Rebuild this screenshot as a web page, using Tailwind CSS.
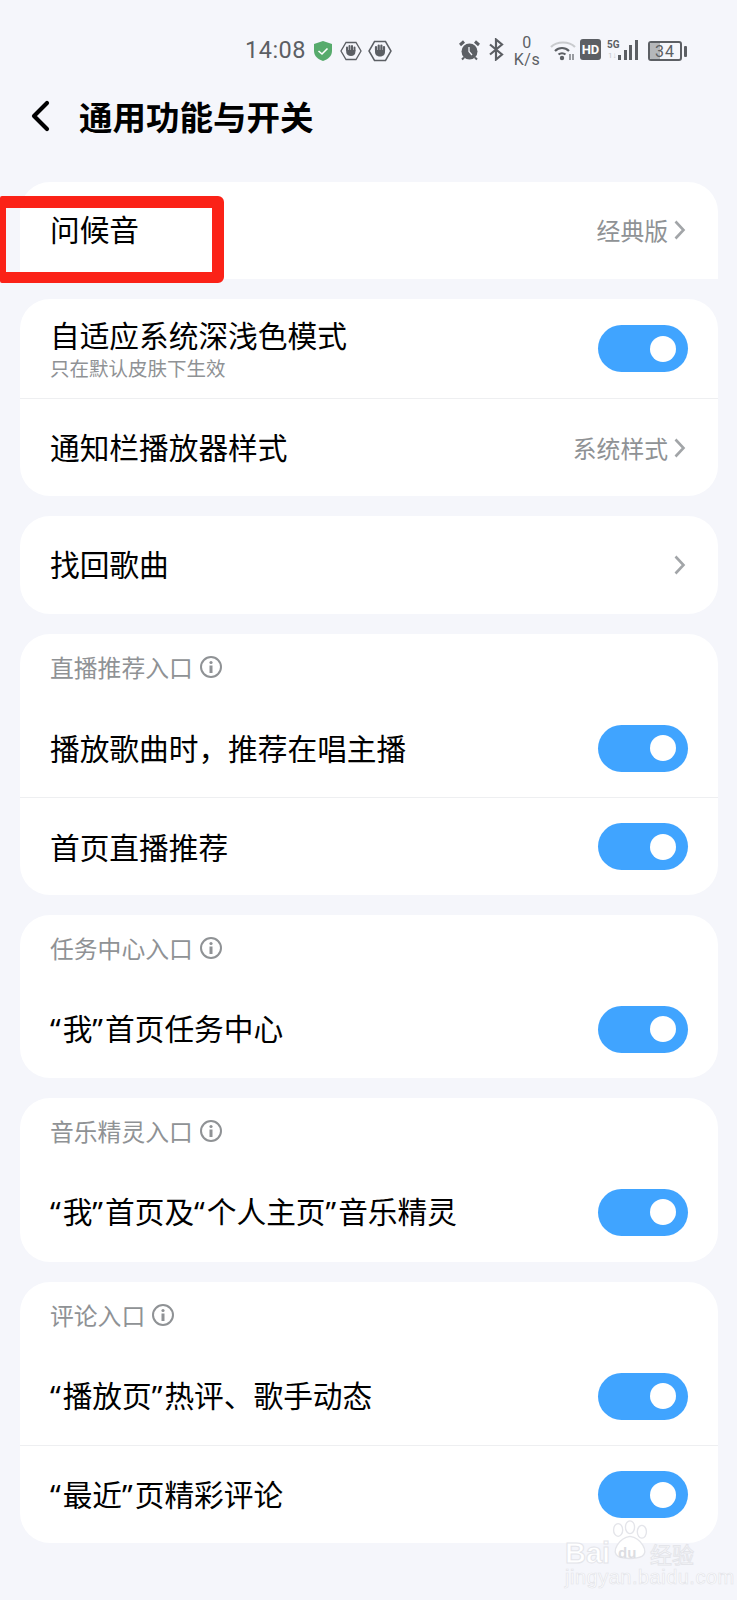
<!DOCTYPE html>
<html lang="zh-CN">
<head>
<meta charset="UTF-8">
<script src="https://cdn.jsdelivr.net/npm/@tailwindcss/browser@4"></script>
<title>通用功能与开关</title>
</head>
<body class="relative w-[737px] h-[1600px] overflow-hidden bg-[#f5f6fb] font-['Noto_Sans_CJK_SC','Noto_Sans',sans-serif] text-black">

<!-- status bar -->
<div class="h-[80px] pt-[31px] pl-[245px] flex items-start text-[#5c5f64]">
  <span class="-mt-[1px] font-['Roboto'] text-[23.500px] leading-[40px] tracking-[0.5px] w-[61px]">14:08</span>
  <svg class="ml-[7px] mt-[9px]" width="20" height="22" viewBox="0 0 20 22"><path d="M10 1 L19 4 V11 C19 16 15 19.500 10 21 C5 19.500 1 16 1 11 V4 Z" fill="#57ab6c"/><path d="M5.500 11 L9 14 L14.500 8.500" fill="none" stroke="#fff" stroke-width="1.600"/></svg>
  <svg class="ml-[7px] mt-[10px]" width="22" height="20" viewBox="0 0 22 20"><path d="M6 1.500 H16 L21 10 L16 18.500 H6 L1 10 Z" fill="none" stroke="#5c5f64" stroke-width="1.300"/><path d="M7 9 V6.500 M9.500 9 V5 M12 9 V5 M14.500 9.500 V6.500" stroke="#5c5f64" stroke-width="2" stroke-linecap="round"/><path d="M6.200 9 H15.400 V11 C15.400 13.500 13.500 15 11 15 C8.500 15 6.200 13.500 6.200 11 Z" fill="#5c5f64"/></svg>
  <svg class="ml-[6px] mt-[9px]" width="24" height="22" viewBox="0 0 24 22"><path d="M6.500 1.500 H17.500 L23 11 L17.500 20.500 H6.500 L1 11 Z" fill="none" stroke="#5c5f64" stroke-width="1.500"/><path d="M8 10 V7 M10.700 10 V5.500 M13.400 10 V5.500 M16 10.500 V7" stroke="#5c5f64" stroke-width="2.200" stroke-linecap="round"/><path d="M7 10 H17 V12 C17 15 14.700 16.500 12 16.500 C9.300 16.500 7 15 7 12 Z" fill="#5c5f64"/></svg>

  <svg class="ml-[67px] mt-[9px]" width="21" height="21" viewBox="0 0 21 21"><circle cx="10.500" cy="11.500" r="8" fill="#5c5f64"/><path d="M1 5 L5 1.500 M20 5 L16 1.500" stroke="#5c5f64" stroke-width="3"/><path d="M3 19.500 L5 17.500 M18 19.500 L16 17.500" stroke="#5c5f64" stroke-width="2"/><path d="M10 7 V11.500 L13 15" fill="none" stroke="#f5f6fb" stroke-width="1.300"/></svg>
  <svg class="ml-[8px] mt-[7px]" width="16" height="23" viewBox="0 0 16 23"><path d="M2 6.500 L14 16.500 L8 21.500 V1.500 L14 6.500 L2 16.500" fill="none" stroke="#5c5f64" stroke-width="2.200"/></svg>
  <div class="ml-[7px] w-[32px] mt-[3px] text-center font-['Roboto'] text-[16px] leading-[17px] tracking-[0.5px]">0<br>K/s</div>
  <svg class="ml-[7px] mt-[9px]" width="26" height="22" viewBox="0 0 26 22"><path d="M1 7 C7 1 19 1 25 7" fill="none" stroke="#c9cbce" stroke-width="2.200"/><path d="M5 11 C9 7 15 7 19 11 M8.500 14.500 C10.500 12.800 13.500 12.800 15.500 14.500" fill="none" stroke="#5c5f64" stroke-width="2.200"/><circle cx="12" cy="18" r="2.200" fill="#5c5f64"/><path d="M20 14 V20 M23 14 V20" stroke="#5c5f64" stroke-width="1.200"/></svg>
  <div class="ml-[4px] mt-[8px] w-[21px] h-[21px] rounded-[3px] bg-[#5c5f64] text-white text-center font-['Roboto'] font-bold text-[13px] leading-[21px]">HD</div>
  <div class="ml-[6px] mt-[9px] relative w-[33px] h-[20px]">
    <span class="absolute left-0 top-0 font-['Roboto'] font-bold text-[10px] leading-[9px]">5G</span>
    <span class="absolute left-[1px] top-[12px] text-[#c4c6c9] font-['Roboto'] text-[8px] leading-[8px]">1↓</span>
    <div class="absolute left-[11px] bottom-0 flex items-end gap-[2.500px]">
      <i class="block w-[3px] h-[5px] bg-[#5c5f64]"></i>
      <i class="block w-[3px] h-[10px] bg-[#5c5f64]"></i>
      <i class="block w-[3px] h-[15px] bg-[#5c5f64]"></i>
      <i class="block w-[3px] h-[20px] bg-[#5c5f64]"></i>
    </div>
  </div>
  <div class="ml-[8px] mt-[10px] relative w-[34px] h-[20px] rounded-[3px] border-2 border-[#5c5f64] overflow-hidden">
    <div class="absolute left-0 top-0 bottom-0 w-[10px] bg-[#b5b7ba]"></div>
    <span class="relative block text-center font-['Roboto'] text-[16px] leading-[17px] tracking-[1px]">34</span>
  </div>
  <i class="block ml-[2px] mt-[15px] w-[3px] h-[11px] rounded-[1px] bg-[#5c5f64]"></i>
</div>

<!-- title -->
<div class="h-[78px] flex items-center pb-[6px]">
  <svg class="ml-[30px]" width="20" height="32" viewBox="0 0 20 32"><path d="M17 3 L4 16 L17 29" fill="none" stroke="#000" stroke-width="4.200" stroke-linecap="round" stroke-linejoin="round"/></svg>
  <h1 class="ml-[29px] text-[33.500px] leading-[40px] font-bold">通用功能与开关</h1>
</div>

<div class="mt-[24px] mx-[20px] w-[698px] flex flex-col gap-[20px]">
  <!-- greeting -->
  <div class="h-[97px] bg-white rounded-t-[30px] pl-[30px] pr-[32px] flex justify-between items-start pt-[25px]">
    <span class="text-[29.700px] leading-[44px]">问候音</span>
    <span class="mt-[1px] flex items-center text-[23.800px] leading-[44px] text-[#8f9295]">经典版
      <svg class="ml-[5px]" width="13" height="22" viewBox="0 0 13 22"><path d="M2.500 2.500 L10.500 11 L2.500 19.500" fill="none" stroke="#a2a5a8" stroke-width="2.600"/></svg>
    </span>
  </div>

  <!-- system -->
  <div class="bg-white rounded-[30px] h-[197px]">
    <div class="h-[100px] border-b border-[#eeeff1] pl-[30px] pr-[30px] flex justify-between items-center">
      <div class="pb-[3px]">
        <div class="text-[29.700px] leading-[40px]">自适应系统深浅色模式</div>
        <div class="mt-[1px] text-[19.500px] leading-[24px] text-[#8f9295]">只在默认皮肤下生效</div>
      </div>
      <div class="w-[90px] h-[47px] rounded-full bg-[#40a4ff] flex items-center justify-end pr-[12px]"><i class="block w-[26px] h-[26px] rounded-full bg-white"></i></div>
    </div>
    <div class="h-[97px] pl-[30px] pr-[32px] flex justify-between items-center">
      <span class="mb-[2px] text-[29.700px] leading-[44px]">通知栏播放器样式</span>
      <span class="flex items-center text-[23.800px] leading-[44px] text-[#8f9295]">系统样式
        <svg class="ml-[5px]" width="13" height="22" viewBox="0 0 13 22"><path d="M2.500 2.500 L10.500 11 L2.500 19.500" fill="none" stroke="#a2a5a8" stroke-width="2.600"/></svg>
      </span>
    </div>
  </div>

  <!-- find songs -->
  <div class="h-[98px] bg-white rounded-[30px] pl-[30px] pr-[32px] flex justify-between items-center">
    <span class="mb-[3px] text-[29.700px] leading-[44px]">找回歌曲</span>
    <svg width="13" height="22" viewBox="0 0 13 22"><path d="M2.500 2.500 L10.500 11 L2.500 19.500" fill="none" stroke="#a2a5a8" stroke-width="2.600"/></svg>
  </div>

  <!-- live -->
  <div class="bg-white rounded-[30px] h-[261px]">
    <div class="h-[65px] pl-[30px] flex items-center text-[23.800px] text-[#8f9295]">直播推荐入口
      <svg class="ml-[6px]" width="24" height="24" viewBox="0 0 24 24"><circle cx="12" cy="12" r="10" fill="none" stroke="#8f9295" stroke-width="2"/><circle cx="12" cy="7.500" r="1.600" fill="#8f9295"/><rect x="10.500" y="10.500" width="3" height="7.500" fill="#8f9295"/></svg>
    </div>
    <div class="h-[99px] border-b border-[#eeeff1] pl-[30px] pr-[30px] flex justify-between items-center">
      <span class="mb-[1px] text-[29.700px] leading-[44px]">播放歌曲时，推荐在唱主播</span>
      <div class="w-[90px] h-[47px] rounded-full bg-[#40a4ff] flex items-center justify-end pr-[12px]"><i class="block w-[26px] h-[26px] rounded-full bg-white"></i></div>
    </div>
    <div class="h-[97px] pl-[30px] pr-[30px] flex justify-between items-center">
      <span class="text-[29.700px] leading-[44px]">首页直播推荐</span>
      <div class="w-[90px] h-[47px] rounded-full bg-[#40a4ff] flex items-center justify-end pr-[12px]"><i class="block w-[26px] h-[26px] rounded-full bg-white"></i></div>
    </div>
  </div>

  <!-- task -->
  <div class="bg-white rounded-[30px] h-[163px]">
    <div class="h-[65px] pl-[30px] flex items-center text-[23.800px] text-[#8f9295]">任务中心入口
      <svg class="ml-[6px]" width="24" height="24" viewBox="0 0 24 24"><circle cx="12" cy="12" r="10" fill="none" stroke="#8f9295" stroke-width="2"/><circle cx="12" cy="7.500" r="1.600" fill="#8f9295"/><rect x="10.500" y="10.500" width="3" height="7.500" fill="#8f9295"/></svg>
    </div>
    <div class="h-[98px] pl-[30px] pr-[30px] flex justify-between items-center">
      <span class="mb-[1px] font-['Noto_Sans','Noto_Sans_CJK_SC',sans-serif] text-[29.700px] leading-[44px]"><span class="tracking-[2px]">“</span>我<span class="tracking-[2px]">”</span>首页任务中心</span>
      <div class="w-[90px] h-[47px] rounded-full bg-[#40a4ff] flex items-center justify-end pr-[12px]"><i class="block w-[26px] h-[26px] rounded-full bg-white"></i></div>
    </div>
  </div>

  <!-- music sprite -->
  <div class="bg-white rounded-[30px] h-[164px]">
    <div class="h-[65px] pl-[30px] flex items-center text-[23.800px] text-[#8f9295]">音乐精灵入口
      <svg class="ml-[6px]" width="24" height="24" viewBox="0 0 24 24"><circle cx="12" cy="12" r="10" fill="none" stroke="#8f9295" stroke-width="2"/><circle cx="12" cy="7.500" r="1.600" fill="#8f9295"/><rect x="10.500" y="10.500" width="3" height="7.500" fill="#8f9295"/></svg>
    </div>
    <div class="h-[98px] pl-[30px] pr-[30px] flex justify-between items-center">
      <span class="mb-[1px] font-['Noto_Sans','Noto_Sans_CJK_SC',sans-serif] text-[29.700px] leading-[44px]"><span class="tracking-[2px]">“</span>我<span class="tracking-[2px]">”</span>首页及<span class="tracking-[2px]">“</span>个人主页<span class="tracking-[2px]">”</span>音乐精灵</span>
      <div class="w-[90px] h-[47px] rounded-full bg-[#40a4ff] flex items-center justify-end pr-[12px]"><i class="block w-[26px] h-[26px] rounded-full bg-white"></i></div>
    </div>
  </div>

  <!-- comments -->
  <div class="bg-white rounded-[30px] h-[261px]">
    <div class="h-[65px] pl-[30px] flex items-center text-[23.800px] text-[#8f9295]">评论入口
      <svg class="ml-[6px]" width="24" height="24" viewBox="0 0 24 24"><circle cx="12" cy="12" r="10" fill="none" stroke="#8f9295" stroke-width="2"/><circle cx="12" cy="7.500" r="1.600" fill="#8f9295"/><rect x="10.500" y="10.500" width="3" height="7.500" fill="#8f9295"/></svg>
    </div>
    <div class="h-[99px] border-b border-[#eeeff1] pl-[30px] pr-[30px] flex justify-between items-center">
      <span class="mb-[1px] font-['Noto_Sans','Noto_Sans_CJK_SC',sans-serif] text-[29.700px] leading-[44px]"><span class="tracking-[2px]">“</span>播放页<span class="tracking-[2px]">”</span>热评、歌手动态</span>
      <div class="w-[90px] h-[47px] rounded-full bg-[#40a4ff] flex items-center justify-end pr-[12px]"><i class="block w-[26px] h-[26px] rounded-full bg-white"></i></div>
    </div>
    <div class="h-[97px] pl-[30px] pr-[30px] flex justify-between items-center">
      <span class="font-['Noto_Sans','Noto_Sans_CJK_SC',sans-serif] text-[29.700px] leading-[44px]"><span class="tracking-[2px]">“</span>最近<span class="tracking-[2px]">”</span>页精彩评论</span>
      <div class="w-[90px] h-[47px] rounded-full bg-[#40a4ff] flex items-center justify-end pr-[12px]"><i class="block w-[26px] h-[26px] rounded-full bg-white"></i></div>
    </div>
  </div>
</div>

<!-- annotation box -->
<div class="absolute left-0 top-[196px] w-[224px] h-[87px] border-l-[6px] border-t-[12px] border-r-[12px] border-b-[11px] border-[#fb2217] rounded-r-[6px] rounded-l-[2px]"></div>

<!-- watermark -->
<div class="absolute left-[562px] top-[1518px] w-[150px] h-[72px] text-white">
  <svg class="absolute left-[47px] top-0" width="42" height="44" viewBox="0 0 46 44"><g fill="#fff" stroke="#e4e5ea" stroke-width="1.500"><ellipse cx="10" cy="11" rx="5" ry="7"/><ellipse cx="23" cy="8" rx="5" ry="7"/><ellipse cx="36" cy="13" rx="5" ry="7"/><path d="M23 18 C35 20 44 34 36 40 C30 43 16 43 10 40 C2 34 11 20 23 18 Z"/></g></svg>
  <span class="absolute left-[3px] top-[22px] font-['Liberation_Sans'] font-bold text-[29px] leading-[26px] [-webkit-text-stroke:1px_#e4e5ea]">Bai</span>
  <span class="absolute left-[56px] top-[26px] font-['Liberation_Sans'] font-bold text-[15px] leading-[18px] text-[#dcdde2]">du</span>
  <span class="absolute left-[88px] top-[23px] text-[22px] leading-[24px] [-webkit-text-stroke:1px_#e4e5ea]">经验</span>
  <span class="absolute left-[3px] top-[49px] font-['Liberation_Sans'] text-[20px] leading-[20px] tracking-[0.5px] whitespace-nowrap [-webkit-text-stroke:0.7px_#e4e5ea]">jingyan.baidu.com</span>
</div>
</body>
</html>
